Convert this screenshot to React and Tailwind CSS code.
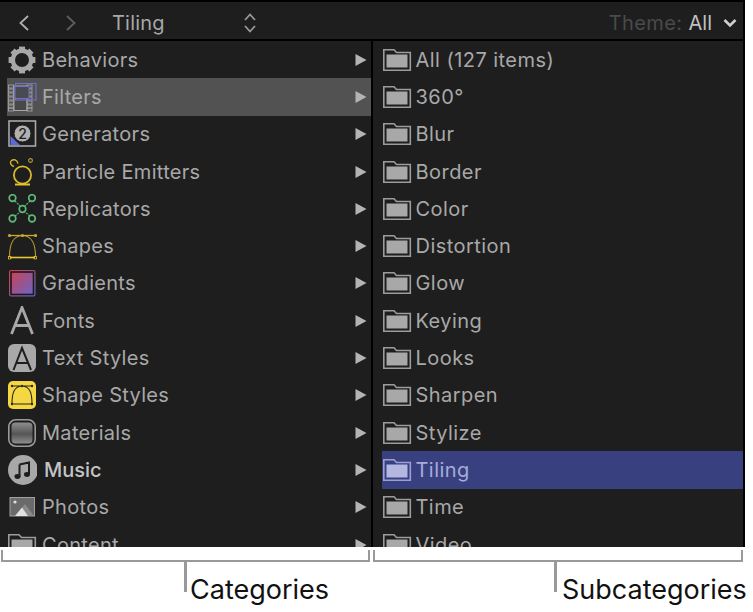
const font = { fontFamily: 'Inter, "Liberation Sans", sans-serif' }

function Gear() {
  const teeth = [0, 45, 90, 135, 180, 225, 270, 315]
  return (
    <svg viewBox="0 0 30 30" className="h-[30px] w-[30px]">
      {teeth.map((a) => (
        <rect key={a} x="12" y="1.6" width="6" height="5" fill="#a8a8a8" transform={`rotate(${a} 15 15)`} />
      ))}
      <circle cx="15" cy="15" r="9.2" fill="none" stroke="#a8a8a8" strokeWidth="4.4" />
    </svg>
  )
}

function FiltersIcon() {
  const holes = [3, 7, 11, 15, 19, 23, 26]
  return (
    <svg viewBox="0 0 30 30" className="h-[30px] w-[30px]">
      <rect x="7" y="4" width="13" height="24.5" fill="#484848" stroke="#a8a8a8" strokeWidth="1" />
      {holes.map((y) => (
        <g key={y}>
          <rect x="1.5" y={y} width="5" height="3" fill="none" stroke="#a8a8a8" strokeWidth="0.8" />
          <rect x="20" y={y} width="5" height="3" fill="none" stroke="#a8a8a8" strokeWidth="0.8" />
        </g>
      ))}
      <rect x="8.5" y="1.5" width="20.5" height="16.5" fill="none" stroke="#6d70c8" strokeWidth="1.2" />
      <rect x="8" y="4.5" width="14" height="12" fill="#4a4a52" stroke="#6d70c8" strokeWidth="1" />
    </svg>
  )
}

function GeneratorsIcon() {
  return (
    <svg viewBox="0 0 30 30" className="h-[30px] w-[30px]">
      <rect x="2" y="2" width="26.5" height="25" fill="#1e1e1e" stroke="#a8a8a8" strokeWidth="1.6" />
      <path d="M3.5 17 L13 26 H3.5 Z" fill="#5f68d8" />
      <circle cx="15.5" cy="14.5" r="8.5" fill="#b0b0b0" stroke="#1e1e1e" strokeWidth="1" />
      <text x="15.5" y="19.5" textAnchor="middle" fontSize="14" fontWeight="500" fill="#1e1e1e" fontFamily="Inter">2</text>
    </svg>
  )
}

function ParticleIcon() {
  return (
    <svg viewBox="0 0 30 30" fill="none" className="h-[30px] w-[30px]">
      <circle cx="15.5" cy="18" r="8.6" stroke="#d7b92e" strokeWidth="1.8" />
      <path d="M7 9.5 C3.5 8.5 2.5 5 4.5 3.5 C6.5 2 10 2.5 11 6.5" stroke="#d7b92e" strokeWidth="1.4" />
      <circle cx="23.5" cy="3.5" r="1.9" stroke="#b79e3a" strokeWidth="1.1" />
      <path d="M8 27.5 H23" stroke="#e2c22e" strokeWidth="2" />
    </svg>
  )
}

function ReplicatorsIcon() {
  const dots = [[5.5, 4], [25, 4], [15.5, 15], [5.5, 24.5], [25, 24.5]]
  return (
    <svg viewBox="0 0 30 30" fill="none" className="h-[30px] w-[30px]">
      <path d="M8 7 L13 12 M23 7 L18 12 M8 22 L13 18 M23 22 L18 18" stroke="#5cb878" strokeWidth="1.2" strokeDasharray="2 1" />
      {dots.map(([cx, cy]) => (
        <circle key={cx + '-' + cy} cx={cx} cy={cy} r="3.3" stroke="#5cb878" strokeWidth="1.7" />
      ))}
    </svg>
  )
}

function ShapesIcon() {
  return (
    <svg viewBox="0 0 30 30" fill="none" className="h-[30px] w-[30px]">
      <path d="M2.5 26 C2.5 14 5 5 15.5 4.5 C26 5 28.5 14 28.5 26" stroke="#b39a2c" strokeWidth="1.2" />
      <path d="M2.5 4.5 H28.5" stroke="#c8aa2c" strokeWidth="1.3" />
      <path d="M3 26.5 H28" stroke="#e8c82e" strokeWidth="1.6" />
      {[2.5, 15.5, 28.5].map((x) => (
        <circle key={x} cx={x} cy="4.5" r="1.6" fill="#c8aa2c" />
      ))}
      <rect x="1.5" y="25.5" width="2.4" height="2.4" stroke="#e0c030" strokeWidth="0.8" />
      <rect x="27" y="25.5" width="2.4" height="2.4" stroke="#e0c030" strokeWidth="0.8" />
    </svg>
  )
}

function GradientsIcon() {
  return (
    <svg viewBox="0 0 30 30" className="h-[30px] w-[30px]">
      <defs>
        <linearGradient id="grad-a" x1="0" y1="0" x2="1" y2="1">
          <stop offset="0" stopColor="#d2404c" />
          <stop offset="1" stopColor="#6468d0" />
        </linearGradient>
      </defs>
      <rect x="2" y="2" width="26.5" height="26.5" rx="2" fill="url(#grad-a)" />
      <rect x="4" y="4" width="22.5" height="22.5" fill="none" stroke="#1a1a1a" strokeWidth="1.6" />
    </svg>
  )
}

function FontsIcon() {
  return (
    <svg viewBox="0 0 30 30" fill="none" className="h-[30px] w-[30px]">
      <path d="M4.5 28 L15 1.5 L25.5 28 M8.5 19.5 H22" stroke="#a8a8a8" strokeWidth="2.8" />
    </svg>
  )
}

function TextStylesIcon() {
  return (
    <svg viewBox="0 0 30 30" fill="none" className="h-[30px] w-[30px]">
      <rect x="1" y="1" width="28" height="28" rx="6" fill="#a8a8a8" />
      <path d="M6.5 27 L15 5 L24 27 M9.5 20 H21" stroke="#1e1e1e" strokeWidth="2" />
    </svg>
  )
}

function ShapeStylesIcon() {
  return (
    <svg viewBox="0 0 30 30" fill="none" className="h-[30px] w-[30px]">
      <rect x="1" y="1" width="28" height="28" rx="5" fill="#f4d743" />
      <path d="M5 24 C5 13 7 6.5 15 6 C23 6.5 25 13 25 24 M5 6 H25 M5 24 H25" stroke="#2a2a1a" strokeWidth="1.1" />
      {[[5, 6], [15, 6], [25, 6], [5, 24], [25, 24]].map(([cx, cy]) => (
        <circle key={cx + '-' + cy} cx={cx} cy={cy} r="1.2" fill="#2a2a1a" />
      ))}
    </svg>
  )
}

function MaterialsIcon() {
  return (
    <svg viewBox="0 0 30 30" fill="none" className="h-[30px] w-[30px]">
      <defs>
        <linearGradient id="mat-a" x1="0" y1="0" x2="0" y2="1">
          <stop offset="0" stopColor="#8e8e8e" />
          <stop offset="0.55" stopColor="#555555" />
          <stop offset="1" stopColor="#8e8e8e" />
        </linearGradient>
      </defs>
      <rect x="1.8" y="1.8" width="26.4" height="26.4" rx="7" stroke="#9a9a9a" strokeWidth="1.6" />
      <rect x="4.5" y="4.5" width="21" height="21" rx="4" fill="url(#mat-a)" />
    </svg>
  )
}

function MusicIcon() {
  return (
    <svg viewBox="0 0 30 30" className="h-[30px] w-[30px]">
      <circle cx="16" cy="15" r="15" fill="#a8a8a8" />
      <path d="M12.5 9.5 L22 7.5 V19" fill="none" stroke="#1e1e1e" strokeWidth="2" />
      <path d="M12.5 9.5 V21.5" fill="none" stroke="#1e1e1e" strokeWidth="2" />
      <ellipse cx="10.5" cy="21.5" rx="3" ry="2.4" fill="#1e1e1e" />
      <ellipse cx="20" cy="19.5" rx="3" ry="2.4" fill="#1e1e1e" />
    </svg>
  )
}

function PhotosIcon() {
  return (
    <svg viewBox="0 0 30 30" className="h-[30px] w-[30px]">
      <rect x="3" y="5.5" width="24.5" height="18.5" fill="#6a6a6a" stroke="#a0a0a0" strokeWidth="1" />
      <circle cx="8" cy="10" r="1.6" fill="#e0e0e0" />
      <path d="M8 24 L18 12 L27 24 Z" fill="#8a8a8a" />
      <path d="M8 24 L15 15.5 L21 24 Z" fill="#e0e0e0" />
    </svg>
  )
}

function Folder({ active }) {
  const stroke = active ? '#9aa0d4' : '#9c9c9c'
  const fill = active ? '#b4b8e0' : '#a8a8a8'
  return (
    <svg viewBox="0 0 30 30" fill="none" className="h-[30px] w-[30px] shrink-0">
      <path d="M1.8 25.3 V4.8 H12 L14.5 7.5 H28.3 V25.3 Z" stroke={stroke} strokeWidth="1.6" />
      <rect x="4.5" y="9.5" width="21" height="13" fill={fill} />
    </svg>
  )
}

const categories = [
  { name: 'Behaviors', icon: <Gear /> },
  { name: 'Filters', icon: <FiltersIcon />, active: true },
  { name: 'Generators', icon: <GeneratorsIcon /> },
  { name: 'Particle Emitters', icon: <ParticleIcon /> },
  { name: 'Replicators', icon: <ReplicatorsIcon /> },
  { name: 'Shapes', icon: <ShapesIcon /> },
  { name: 'Gradients', icon: <GradientsIcon /> },
  { name: 'Fonts', icon: <FontsIcon /> },
  { name: 'Text Styles', icon: <TextStylesIcon /> },
  { name: 'Shape Styles', icon: <ShapeStylesIcon /> },
  { name: 'Materials', icon: <MaterialsIcon /> },
  { name: 'Music', icon: <MusicIcon />, music: true },
  { name: 'Photos', icon: <PhotosIcon /> },
  { name: 'Content', icon: <Folder /> },
]

const subcategories = [
  'All (127 items)', '360°', 'Blur', 'Border', 'Color', 'Distortion', 'Glow',
  'Keying', 'Looks', 'Sharpen', 'Stylize', 'Tiling', 'Time', 'Video',
]

function CategoryRow({ item }) {
  return (
    <div className={`flex h-[37.3px] shrink-0 items-center ${item.active ? 'bg-[#525252]' : ''}`}>
      <span className="shrink-0">{item.icon}</span>
      <span className={`text-[20px] ${item.music ? 'ml-[7px] font-medium tracking-[0px] text-[#c4c4c4]' : 'ml-[5px] tracking-[0.3px] text-[#a8a8a8]'}`}>
        {item.name}
      </span>
      <svg viewBox="0 0 12 14" className="ml-auto mr-[4px] h-[14px] w-[12px]">
        <path d="M0.5 1 L11.5 7 L0.5 13 Z" fill="#b4b4b4" />
      </svg>
    </div>
  )
}

function SubRow({ name }) {
  const active = name === 'Tiling'
  return (
    <div className={`flex h-[37.3px] shrink-0 items-center ${active ? 'bg-[#394080]' : ''}`}>
      <Folder active={active} />
      <span className={`ml-[4px] text-[20px] tracking-[0.45px] ${active ? 'text-[#a6acdc]' : 'text-[#a8a8a8]'}`}>{name}</span>
    </div>
  )
}

function Bracket({ width, stemLeft, label, gap }) {
  return (
    <div style={{ width }}>
      <div className="h-[12px] border-x-[2px] border-b-[2px] border-[#999999]" />
      <div className="flex" style={{ marginLeft: stemLeft }}>
        <div className="h-[30px] w-[3px] shrink-0 bg-[#999999]" />
        <span className="mt-[12px] whitespace-nowrap text-[27px] leading-[32px] text-[#111111]" style={{ marginLeft: gap }}>
          {label}
        </span>
      </div>
    </div>
  )
}

export default function App() {
  return (
    <div className="h-[612px] w-[753px] overflow-hidden bg-white" style={font}>
      <div className="w-[745px] bg-black pb-0 pr-[2px] pt-[2px]">
        <div className="flex h-[37px] items-center bg-[#1e1e1e] pt-[4px]">
          <svg viewBox="0 0 14 18" fill="none" className="ml-[17px] h-[18px] w-[14px]">
            <path d="M11 2 L3.5 9 L11 16" stroke="#b0b0b0" strokeWidth="1.8" />
          </svg>
          <svg viewBox="0 0 14 18" fill="none" className="ml-[33px] h-[18px] w-[14px]">
            <path d="M3 2 L10.5 9 L3 16" stroke="#5e5e5e" strokeWidth="1.8" />
          </svg>
          <span className="ml-[34px] text-[20px] tracking-[0.2px] text-[#a8a8a8]">Tiling</span>
          <svg viewBox="0 0 14 22" fill="none" className="ml-[78px] h-[22px] w-[14px]">
            <path d="M2 8 L7 2.5 L12 8 M2 14 L7 19.5 L12 14" stroke="#9a9a9a" strokeWidth="1.8" />
          </svg>
          <span className="ml-auto text-[20px] tracking-[0.4px] text-[#4a4a4a]">Theme:</span>
          <span className="ml-[6px] text-[20px] text-[#c0c0c0]">All</span>
          <svg viewBox="0 0 14 10" fill="none" className="ml-[11px] mr-[6px] h-[10px] w-[14px]">
            <path d="M1.5 2 L7 7.5 L12.5 2" stroke="#d0d0d0" strokeWidth="2.6" />
          </svg>
        </div>
        <div className="mt-[2px] flex h-[506px] gap-[1.5px] overflow-hidden">
          <div className="flex w-[371px] flex-col overflow-hidden bg-[#1e1e1e] pl-[7px]">
            {categories.map((item) => (
              <CategoryRow key={item.name} item={item} />
            ))}
          </div>
          <div className="flex flex-1 flex-col overflow-hidden bg-[#1e1e1e] pl-[9px]">
            {subcategories.map((name) => (
              <SubRow key={name} name={name} />
            ))}
          </div>
        </div>
      </div>
      <div className="ml-[1px] mt-[3px] flex gap-[3px]">
        <Bracket width={369} stemLeft={183} gap={3} label="Categories" />
        <Bracket width={370} stemLeft={181} gap={5} label="Subcategories" />
      </div>
    </div>
  )
}
